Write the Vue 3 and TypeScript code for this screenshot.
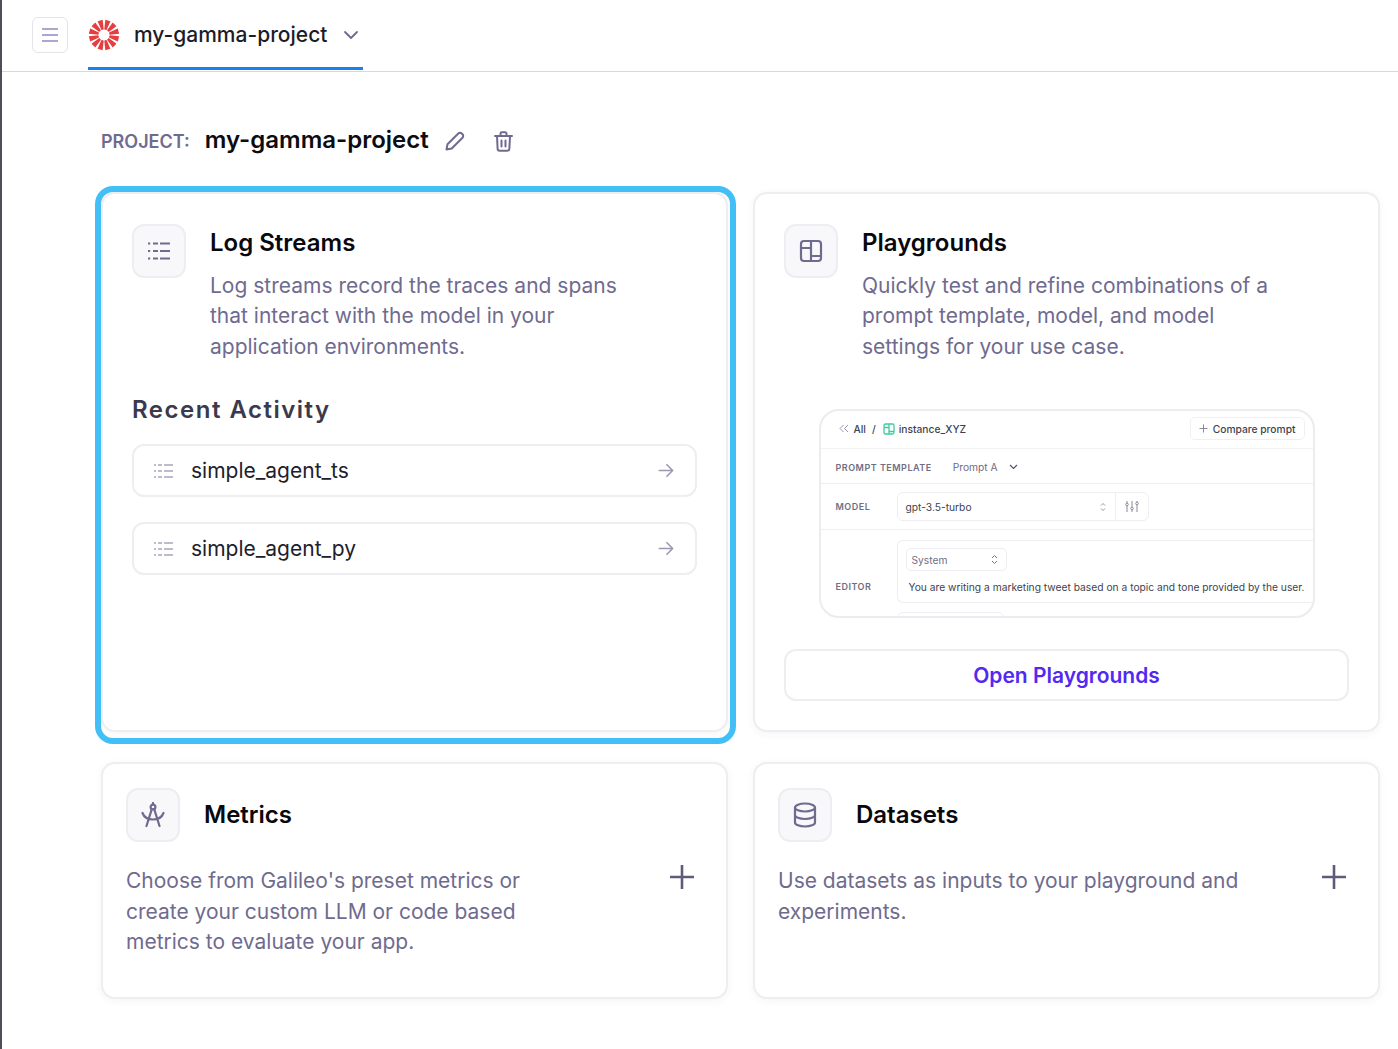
<script setup lang="ts">
const spokes: number[] = Array.from({ length: 12 }, (_, i) => i * 30 + 15)
const streams: string[] = ['simple_agent_ts', 'simple_agent_py']
</script>

<template>
  <div class="page">
    <header class="topbar">
      <button class="menu-btn" aria-label="menu">
        <svg width="18" height="14" viewBox="0 0 18 14" fill="none" stroke="#8f8cc4" stroke-width="1.5">
          <path d="M1 1h16M1 7h16M1 13h16" />
        </svg>
      </button>
      <div class="tab">
        <svg class="logo" width="32" height="32" viewBox="-16 -16 32 32">
          <path
            v-for="a in spokes"
            :key="a"
            d="M-1.200 -5.500 L1.200 -5.500 L2.600 -15 L-2.600 -15 Z"
            fill="#e53e3e"
            :transform="`rotate(${a})`"
          />
        </svg>
        <span class="tab-name">my-gamma-project</span>
        <svg class="tab-chev" width="16" height="10" viewBox="0 0 16 10" fill="none" stroke="#6c6a94" stroke-width="1.800" stroke-linecap="round" stroke-linejoin="round">
          <path d="M2 2l6 6 6-6" />
        </svg>
      </div>
    </header>

    <main class="main">
      <div class="project-row">
        <span class="project-label">PROJECT:</span>
        <h1 class="project-name">my-gamma-project</h1>
        <svg class="edit" width="20" height="20" viewBox="0 0 20 20" fill="none" stroke="#6f6b8f" stroke-width="2" stroke-linecap="round" stroke-linejoin="round">
          <path d="M1.500 18.500l1-5.200L13.300 2.500a2.400 2.400 0 0 1 3.400 0l.8.8a2.400 2.400 0 0 1 0 3.400L6.700 17.500z" />
        </svg>
        <svg class="trash" width="19" height="21" viewBox="0 0 19 21" fill="none" stroke="#6f6b8f" stroke-width="2" stroke-linecap="round" stroke-linejoin="round">
          <path d="M1 5h17M6.500 5V2.500A1.200 1.200 0 0 1 7.700 1.300h3.600a1.200 1.200 0 0 1 1.200 1.200V5" />
          <path d="M3 5l.6 12.500A2.200 2.200 0 0 0 5.800 19.700h7.400a2.200 2.200 0 0 0 2.200-2.200L16 5" />
          <path d="M7.500 9.500v6M11.500 9.500v6" />
        </svg>
      </div>

      <div class="grid">
        <section class="card card-log">
          <div class="highlight"></div>
          <div class="head">
            <div class="icon-box">
              <svg width="22" height="18" viewBox="0 0 22 18" fill="none" stroke="#6f6b8f" stroke-width="2.200">
                <path d="M0 1.500h2.200M0 9h2.200M0 16.500h2.200" />
                <path d="M5 1.500h5M5 9h5M5 16.500h5" />
                <path d="M12 1.500h10M12 9h10M12 16.500h10" />
              </svg>
            </div>
            <div class="head-text">
              <h2 class="title">Log Streams</h2>
              <p class="desc">Log streams record the traces and spans<br />that interact with the model in your<br />application environments.</p>
            </div>
          </div>
          <h3 class="recent">Recent Activity</h3>
          <div class="streams">
            <a v-for="s in streams" :key="s" class="stream">
              <svg width="19" height="14" viewBox="0 0 19 14" fill="none" stroke="#a9a6bc" stroke-width="1.600">
                <path d="M0 1h2M0 7h2M0 13h2" />
                <path d="M4 1h4M4 7h4M4 13h4" />
                <path d="M10 1h9M10 7h9M10 13h9" />
              </svg>
              <span class="stream-name">{{ s }}</span>
              <svg class="arrow" width="16" height="15" viewBox="0 0 18 16" fill="none" stroke="#9b98b2" stroke-width="1.800" stroke-linecap="round" stroke-linejoin="round">
                <path d="M1.500 8h15M10 1.500L16.500 8 10 14.500" />
              </svg>
            </a>
          </div>
        </section>

        <section class="card card-play">
          <div class="head">
            <div class="icon-box">
              <svg width="24" height="24" viewBox="0 0 24 24" fill="none" stroke="#6f6b8f" stroke-width="2.200" stroke-linejoin="round">
                <rect x="2" y="2" width="20" height="20" rx="3" />
                <path d="M2 9h10M12 2v20M12 17h10" />
              </svg>
            </div>
            <div class="head-text">
              <h2 class="title">Playgrounds</h2>
              <p class="desc">Quickly test and refine combinations of a<br />prompt template, model, and model<br />settings for your use case.</p>
            </div>
          </div>

          <div class="preview">
            <div class="pv-top">
              <svg width="10" height="9" viewBox="0 0 10 9" fill="none" stroke="#9a98ad" stroke-width="1">
                <path d="M4.500 1L1 4.500 4.500 8M9 1L5.500 4.500 9 8" />
              </svg>
              <span class="pv-all">All</span>
              <span class="pv-slash">/</span>
              <svg width="12" height="12" viewBox="0 0 12 12" fill="none" stroke="#3ecb9f" stroke-width="1.300">
                <rect x="1" y="1" width="10" height="10" rx="1.500" />
                <path d="M1 4.500h5M6 1v10M6 8.500h5" />
              </svg>
              <span class="pv-inst">instance_XYZ</span>
              <span class="pv-compare">
                <svg width="9" height="9" viewBox="0 0 9 9" fill="none" stroke="#8c8a9c" stroke-width="1"><path d="M4.500 0.500v8M0.500 4.500h8" /></svg>
                Compare prompt
              </span>
            </div>
            <div class="pv-prompt">
              <span class="pv-label pv-label-wide">PROMPT TEMPLATE</span>
              <span class="pv-promptname">Prompt A</span>
              <svg width="9" height="6" viewBox="0 0 9 6" fill="none" stroke="#55536a" stroke-width="1.200"><path d="M1 1l3.500 3.500L8 1" /></svg>
            </div>
            <div class="pv-model">
              <span class="pv-label pv-label-col">MODEL</span>
              <div class="pv-select">
                <span class="pv-select-main">
                  gpt-3.5-turbo
                  <svg class="updown" width="6" height="10" viewBox="0 0 6 10" fill="none" stroke="#8c8a9c" stroke-width="0.900"><path d="M1 3.500L3 1.500 5 3.500M1 6.500L3 8.500 5 6.500" /></svg>
                </span>
                <span class="pv-select-tune">
                  <svg width="14" height="13" viewBox="0 0 14 13" fill="none" stroke="#8c8a9c" stroke-width="1">
                    <path d="M2 1v2M2 6v6M7 1v6M7 10v2M12 1v1M12 5v7" />
                    <circle cx="2" cy="4.500" r="1.300" /><circle cx="7" cy="8.500" r="1.300" /><circle cx="12" cy="3.500" r="1.300" />
                  </svg>
                </span>
              </div>
            </div>
            <div class="pv-editor">
              <span class="pv-label pv-label-col pv-label-editor">EDITOR</span>
              <div class="pv-editor-col">
                <div class="pv-msg">
                  <span class="pv-role">
                    System
                    <svg width="7" height="11" viewBox="0 0 7 11" fill="none" stroke="#77758a" stroke-width="1"><path d="M1 4L3.500 1.500 6 4M1 7l2.500 2.500L6 7" /></svg>
                  </span>
                  <p class="pv-text">You are writing a marketing tweet based on a topic and tone provided by the user.</p>
                </div>
                <div class="pv-next"></div>
              </div>
            </div>
          </div>

          <button class="open-btn">Open Playgrounds</button>
        </section>

        <section class="card card-small">
          <div class="small-head">
            <div class="icon-box">
              <svg width="24" height="26" viewBox="0 0 24 26" fill="none" stroke="#6f6b8f" stroke-width="2.200" stroke-linecap="round" stroke-linejoin="round">
                <circle cx="12" cy="5" r="2.400" />
                <path d="M12 1v1.500M10.800 7.200L5.500 24M13.200 7.200L18.500 24" />
                <path d="M1.500 11c1.500 4 5.500 6.500 10.500 6.500s9-2.500 10.500-6.500" />
              </svg>
            </div>
            <h2 class="title">Metrics</h2>
          </div>
          <div class="small-body">
            <p class="desc">Choose from Galileo's preset metrics or<br />create your custom LLM or code based<br />metrics to evaluate your app.</p>
            <svg class="plus" width="26" height="26" viewBox="0 0 26 26" fill="none" stroke="#5f5b7d" stroke-width="2.600"><path d="M13 1v24M1 13h24" /></svg>
          </div>
        </section>

        <section class="card card-small">
          <div class="small-head">
            <div class="icon-box">
              <svg width="24" height="26" viewBox="0 0 24 26" fill="none" stroke="#6f6b8f" stroke-width="2.200">
                <ellipse cx="12" cy="5.500" rx="10" ry="4" />
                <path d="M2 5.500v15c0 2.200 4.500 4 10 4s10-1.800 10-4v-15M2 13c0 2.200 4.500 4 10 4s10-1.800 10-4" />
              </svg>
            </div>
            <h2 class="title">Datasets</h2>
          </div>
          <div class="small-body">
            <p class="desc">Use datasets as inputs to your playground and<br />experiments.</p>
            <svg class="plus" width="26" height="26" viewBox="0 0 26 26" fill="none" stroke="#5f5b7d" stroke-width="2.600"><path d="M13 1v24M1 13h24" /></svg>
          </div>
        </section>
      </div>
    </main>
  </div>
</template>

<style>
html, body { margin: 0; background: #fff; }
</style>

<style scoped>
.page {
  box-sizing: border-box;
  height: 1049px;
  overflow: hidden;
  border-left: 2px solid #4f4d55;
  font-family: Inter, "Liberation Sans", sans-serif;
  background: #fff;
}
.topbar {
  box-sizing: border-box;
  height: 72px;
  display: flex;
  align-items: flex-start;
  padding-left: 30px;
  border-bottom: 1px solid #d8d8dc;
}
.menu-btn {
  box-sizing: border-box;
  width: 36px;
  height: 36px;
  margin-top: 17px;
  display: flex;
  align-items: center;
  justify-content: center;
  padding: 0;
  background: #fff;
  border: 1.500px solid #e4e4ea;
  border-radius: 6px;
}
.tab {
  box-sizing: border-box;
  width: 275px;
  height: 70px;
  margin-left: 20px;
  padding-top: 2px;
  display: flex;
  align-items: center;
  border-bottom: 3px solid #1a80f0;
}
.logo { margin-right: 14px; flex: none; }
.tab-name { font-size: 21px; font-weight: 500; color: #1c1c28; white-space: nowrap; }
.tab-chev { margin-left: 16px; flex: none; }
.main { padding: 49px 18px 0 99px; }
.project-row { display: flex; align-items: center; height: 40px; margin-bottom: 31px; }
.project-label { font-size: 18px; font-weight: 600; color: #6f6b8f; margin-right: 15px; }
.project-name { margin: 0 16px 3px 0; font-size: 24px; font-weight: 600; color: #0c0c12; }
.trash { margin-left: 29px; }
.grid {
  display: grid;
  grid-template-columns: 1fr 1fr;
  grid-template-rows: 540px 237px;
  gap: 30px 25px;
}
.card {
  position: relative;
  box-sizing: border-box;
  background: #fff;
  border: 2px solid #eeeef2;
  border-radius: 14px;
  box-shadow: 0 2px 8px rgba(60, 60, 90, 0.05);
  display: flex;
  flex-direction: column;
}
.card-log, .card-play { padding: 30px 29px 29px 29px; }
.highlight {
  position: absolute;
  left: -8px;
  right: -10px;
  top: -8px;
  bottom: -14px;
  border: 6px solid #43bff8;
  border-radius: 18px;
  pointer-events: none;
}
.head { display: flex; gap: 24px; }
.icon-box {
  box-sizing: border-box;
  flex: none;
  width: 54px;
  height: 54px;
  display: flex;
  align-items: center;
  justify-content: center;
  background: #f8f8fb;
  border: 2px solid #eeeef2;
  border-radius: 12px;
}
.title { margin: 0; font-size: 24px; line-height: 38px; font-weight: 600; color: #08080d; }
.head-text .title { margin-bottom: 8.600px; }
.desc { margin: 0; font-size: 21px; line-height: 30.500px; color: #6f6b8f; }
.recent { margin: 32.400px 0 18px; font-size: 24px; line-height: 32px; font-weight: 600; letter-spacing: 1.500px; color: #3a3a4c; }
.streams { display: flex; flex-direction: column; gap: 25px; }
.stream {
  box-sizing: border-box;
  height: 53px;
  display: flex;
  align-items: center;
  padding: 0 21px 0 20px;
  border: 2px solid #eeeef2;
  border-radius: 12px;
}
.stream-name { margin-left: 18px; font-size: 21px; color: #20202c; }
.arrow { margin-left: auto; }
.preview {
  box-sizing: border-box;
  flex: none;
  align-self: center;
  width: 496px;
  height: 209px;
  margin-top: auto;
  overflow: hidden;
  border: 2px solid #ebebf0;
  border-radius: 20px;
  font-size: 10.250px;
  color: #3f3f4f;
}
.pv-top { height: 35px; padding: 0 8px 2px 18px; display: flex; align-items: center; border-bottom: 1px solid #f2f2f5; font-weight: 500; }
.pv-all { margin-left: 5px; }
.pv-slash { margin: 0 7px 0 6px; }
.pv-inst { margin-left: 4px; }
.pv-compare {
  box-sizing: border-box;
  margin-left: auto;
  height: 23px;
  display: flex;
  align-items: center;
  gap: 5px;
  padding: 0 8px;
  border: 1px solid #f0f0f3;
  border-radius: 5px;
}
.pv-prompt { height: 32px; padding: 2px 0 0 15px; display: flex; align-items: center; border-bottom: 1px solid #efeff2; }
.pv-label { font-size: 9px; font-weight: 600; letter-spacing: 0.500px; color: #6f6e83; }
.pv-label-wide { margin-right: 21px; }
.pv-promptname { margin-right: 11px; color: #6f6e83; }
.pv-model { height: 45px; display: flex; align-items: center; padding-left: 15px; border-bottom: 1px solid #efeff2; }
.pv-label-col { width: 61px; flex: none; }
.pv-select { box-sizing: border-box; width: 252px; height: 29px; display: flex; border: 1px solid #eeeef2; border-radius: 6px; }
.pv-select-main { flex: 1; display: flex; align-items: center; justify-content: space-between; padding: 0 9px 0 8px; border-right: 1px solid #eeeef2; }
.pv-select-tune { width: 32px; display: flex; align-items: center; justify-content: center; }
.pv-editor { display: flex; padding-left: 15px; }
.pv-label-editor { margin-top: 51px; }
.pv-editor-col { flex: 1; padding-top: 10px; min-width: 0; }
.pv-msg { box-sizing: border-box; width: 440px; height: 63px; padding: 7px 0 0 8px; border: 1px solid #eeeef2; border-right: 0; border-radius: 6px 0 0 6px; }
.pv-role { box-sizing: border-box; width: 101px; height: 23px; display: flex; align-items: center; justify-content: space-between; padding: 0 8px 0 5px; border: 1px solid #eeeef2; border-radius: 5px; color: #6f6e83; }
.pv-text { margin: 10px 0 0 3px; white-space: nowrap; }
.pv-next { width: 105px; height: 20px; margin-top: 9px; border: 1px solid #eeeef2; border-radius: 6px; }
.open-btn {
  box-sizing: border-box;
  flex: none;
  height: 52px;
  margin-top: 31px;
  background: #fff;
  border: 2px solid #eeeef2;
  border-radius: 12px;
  font-family: inherit;
  font-size: 21px;
  font-weight: 600;
  color: #5229f0;
}
.card-small { padding: 24px 31px 0 23px; }
.small-head { display: flex; align-items: center; gap: 24px; }
.small-body { display: flex; justify-content: space-between; align-items: flex-start; margin-top: 24.300px; }
.plus { margin-top: -2px; }
</style>
